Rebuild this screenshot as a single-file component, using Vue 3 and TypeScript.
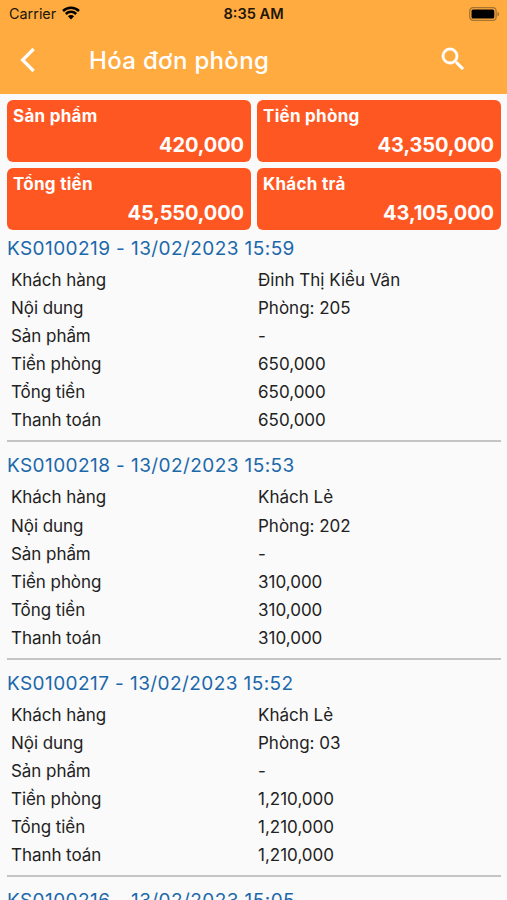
<script setup lang="ts">
interface Summary { label: string; value: string }
interface Invoice { code: string; time: string; rows: [string, string][] }

const summaries: Summary[] = [
  { label: 'Sản phẩm', value: '420,000' },
  { label: 'Tiền phòng', value: '43,350,000' },
  { label: 'Tổng tiền', value: '45,550,000' },
  { label: 'Khách trả', value: '43,105,000' },
]

function invoice(code: string, time: string, customer: string, room: string, amount: string): Invoice {
  return {
    code,
    time,
    rows: [
      ['Khách hàng', customer],
      ['Nội dung', `Phòng: ${room}`],
      ['Sản phẩm', '-'],
      ['Tiền phòng', amount],
      ['Tổng tiền', amount],
      ['Thanh toán', amount],
    ],
  }
}

const invoices: Invoice[] = [
  invoice('KS0100219', '13/02/2023 15:59', 'Đinh Thị Kiều Vân', '205', '650,000'),
  invoice('KS0100218', '13/02/2023 15:53', 'Khách Lẻ', '202', '310,000'),
  invoice('KS0100217', '13/02/2023 15:52', 'Khách Lẻ', '03', '1,210,000'),
  { code: 'KS0100216', time: '13/02/2023 15:05', rows: [] },
]
</script>

<template>
  <div class="screen">
    <header class="header">
      <div class="status">
        <div class="carrier">
          <span>Carrier</span>
          <svg class="wifi" width="18" height="14" viewBox="0 0 18 14">
            <path d="M1 5a11.4 11.4 0 0 1 16 0" />
            <path d="M3.8 8a7.4 7.4 0 0 1 10.4 0" />
            <path class="dot" d="M9 13.4 5.9 10.3a4.4 4.4 0 0 1 6.2 0z" />
          </svg>
        </div>
        <span class="clock">8:35 AM</span>
        <svg class="battery" width="31" height="14" viewBox="0 0 31 14">
          <rect class="shell" x="0.7" y="0.7" width="26.4" height="12.6" rx="3.4" />
          <rect x="2.5" y="2.5" width="22.8" height="9" rx="1.6" />
          <path class="cap" d="M28.4 4.7c2.4.8 2.4 3.8 0 4.6z" />
        </svg>
      </div>
      <div class="appbar">
        <svg class="back" width="16" height="26" viewBox="0 0 16 26">
          <path d="M13.6 2 2.6 13l11 11" />
        </svg>
        <h1 class="title">Hóa đơn phòng</h1>
        <svg class="search" width="30.4" height="30.4" viewBox="0 0 24 24">
          <path d="M15.5 14h-.79l-.28-.27A6.47 6.47 0 0 0 16 9.5 6.5 6.5 0 1 0 9.5 16c1.61 0 3.09-.59 4.23-1.57l.27.28v.79l5 4.99L20.49 19l-4.99-5zm-6 0C7.01 14 5 11.99 5 9.5S7.01 5 9.5 5 14 7.01 14 9.5 11.99 14 9.5 14z" />
        </svg>
      </div>
    </header>

    <section class="summaries">
      <div v-for="s in summaries" :key="s.label" class="card">
        <span class="card-label">{{ s.label }}</span>
        <span class="card-value">{{ s.value }}</span>
      </div>
    </section>

    <main class="list">
      <article v-for="inv in invoices" :key="inv.code" class="invoice">
        <h2 class="heading">{{ inv.code }} - {{ inv.time }}</h2>
        <div v-for="row in inv.rows" :key="row[0]" class="row">
          <span class="name">{{ row[0] }}</span>
          <span>{{ row[1] }}</span>
        </div>
        <div v-if="inv.rows.length" class="divider"></div>
      </article>
    </main>
  </div>
</template>

<style>
body {
  margin: 0;
  overflow: hidden;
}
</style>

<style scoped>
.screen {
  box-sizing: border-box;
  width: 507px;
  height: 900px;
  overflow: hidden;
  background: #fafafa;
  color: #222;
  font-family: Inter, Roboto, sans-serif;
}
.header {
  height: 94px;
  background: #ffab40;
}
.status {
  display: grid;
  grid-template-columns: 1fr auto 1fr;
  align-items: center;
  height: 27px;
  padding: 0 7px 0 9px;
  color: #21160a;
  font-size: 14.4px;
}
.carrier {
  display: flex;
  align-items: center;
  gap: 6px;
}
.wifi {
  margin-bottom: 2px;
  fill: none;
  stroke: #000;
  stroke-width: 2.5;
}
.wifi .dot {
  fill: #000;
  stroke: none;
}
.clock {
  margin-left: -2px;
  font-size: 14.6px;
  font-weight: 600;
}
.battery {
  justify-self: end;
}
.shell {
  fill: none;
  stroke: #a87430;
  stroke-width: 1.3;
}
.cap {
  fill: #a87430;
}
.appbar {
  display: flex;
  align-items: center;
  height: 65px;
  padding: 0 39px 0 20px;
}
.back {
  fill: none;
  stroke: #fff;
  stroke-width: 3.2;
}
.title {
  flex: 1;
  margin: 2px 0 0 53px;
  color: #fff;
  font-size: 24px;
  font-weight: 500;
  letter-spacing: 0.33px;
  line-height: 30px;
}
.search {
  fill: #fff;
  stroke: #fff;
  stroke-width: 0.3;
}
.summaries {
  display: grid;
  grid-template-columns: 1fr 1fr;
  gap: 6.4px 6px;
  padding: 6px 6px 0.1px 7px;
}
.card {
  box-sizing: border-box;
  display: flex;
  flex-direction: column;
  height: 62px;
  padding: 4px 7px 0 6px;
  border-radius: 6px;
  background: #ff5722;
  color: #fff;
  font-weight: 650;
}
.card-label {
  font-size: 17px;
  letter-spacing: 0.28px;
  line-height: 24px;
}
.card-value {
  align-self: flex-end;
  font-size: 20px;
  letter-spacing: -0.1px;
  line-height: 34px;
}
.list {
  padding: 0 6px 0 7px;
}
.invoice {
  height: 217.5px;
}
.heading {
  margin: 0;
  padding-top: 1.5px;
  color: #1b68ab;
  font-size: 19px;
  font-weight: 400;
  letter-spacing: 0.42px;
  line-height: 34px;
}
.row {
  display: grid;
  grid-template-columns: 247px 1fr;
  padding-left: 4px;
  font-size: 17px;
  line-height: 28.1px;
}
.name {
  letter-spacing: -0.06px;
}
.divider {
  height: 2px;
  margin-top: 5.5px;
  background: #c4c4c4;
}
</style>
